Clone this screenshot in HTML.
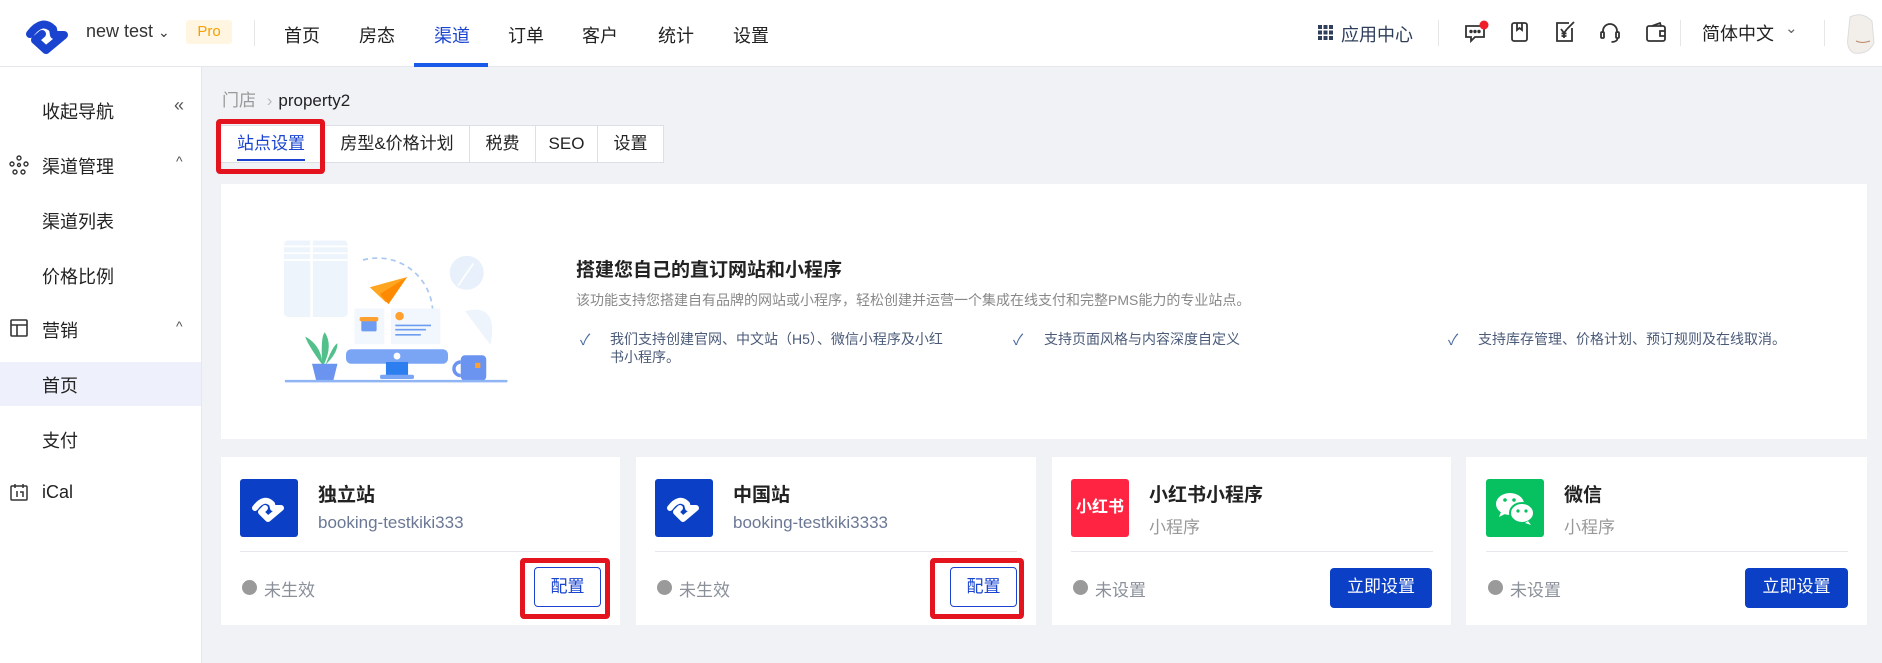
<!DOCTYPE html>
<html><head><meta charset="utf-8"><style>
*{box-sizing:border-box;margin:0;padding:0}
body{width:1882px;height:663px;overflow:hidden;background:#f0f2f6;font-family:"Liberation Sans","Noto Sans CJK SC",sans-serif;color:#222;position:relative}
.a{position:absolute;white-space:nowrap}
#hd{position:absolute;left:0;top:0;width:1882px;height:67px;background:#fff;border-bottom:1px solid #e6e8ee}
#sb{position:absolute;left:0;top:67px;width:202px;height:596px;background:#fff;border-right:1px solid #e6e8ee}
.nav{font-size:18px;color:#222;top:22px}
.si{font-size:18px;color:#222;left:42px}
.card{position:absolute;background:#fff}
.tab{position:absolute;top:125px;height:38px;border:1px solid #dcdfe6;background:#fff;font-size:17px;text-align:center;line-height:36px;color:#222}
.chk{font-size:14px;color:#4a5a78;line-height:18px}
.ck{color:#4a6aa0;font-size:15px}
.ttl{font-size:19px;font-weight:bold;color:#222}
.sub{font-size:17px;color:#6b7895}
.st{font-size:17px;color:#8a8f99}
.dot{width:15px;height:15px;border-radius:50%;background:#9a9a9a}
.btn{height:40px;border-radius:4px;font-size:17px;text-align:center;line-height:38px}
.red{position:absolute;border:5px solid #e3141e;border-radius:4px}
.ic{position:absolute;top:20px}
</style></head><body>
<div id="hd">
<svg class="a" style="left:22px;top:12px" width="48" height="42" viewBox="0 0 48 42"><path d="M8 22 Q20 6 31 17 L32 23 L42 23 L24 38 L13 28 L20 22" fill="none" stroke="#1a44d0" stroke-width="8" stroke-linejoin="round" stroke-linecap="round"/></svg>
<div class="a" style="left:86px;top:21px;font-size:18px;color:#333">new test <span style="font-size:14px">⌄</span></div>
<div class="a" style="left:186px;top:20px;width:46px;height:24px;background:#fff5e0;color:#f5a000;font-size:15px;text-align:center;line-height:24px;border-radius:3px">Pro</div>
<div class="a" style="left:254px;top:20px;width:1px;height:26px;background:#e6e6e6"></div>
<div class="a nav" style="left:284px">首页</div>
<div class="a nav" style="left:359px">房态</div>
<div class="a nav" style="left:434px;color:#1a44d0">渠道</div>
<div class="a nav" style="left:508px">订单</div>
<div class="a nav" style="left:582px">客户</div>
<div class="a nav" style="left:658px">统计</div>
<div class="a nav" style="left:733px">设置</div>
<div class="a" style="left:414px;top:63px;width:74px;height:4px;background:#1a5ae8"></div>
<svg class="a" style="left:1318px;top:25px" width="15" height="15"><g fill="#2f3e5a"><rect x="0" y="0" width="4" height="4"/><rect x="5.5" y="0" width="4" height="4"/><rect x="11" y="0" width="4" height="4"/><rect x="0" y="5.5" width="4" height="4"/><rect x="5.5" y="5.5" width="4" height="4"/><rect x="11" y="5.5" width="4" height="4"/><rect x="0" y="11" width="4" height="4"/><rect x="5.5" y="11" width="4" height="4"/><rect x="11" y="11" width="4" height="4"/></g></svg>
<div class="a" style="left:1341px;top:21px;font-size:18px;color:#2f3e5a">应用中心</div>
<div class="a" style="left:1438px;top:20px;width:1px;height:26px;background:#e6e6e6"></div>
<svg class="ic a" style="left:1463px" width="26" height="26" viewBox="0 0 26 26" fill="none" stroke="#333" stroke-width="1.8"><path d="M3 6h18v11h-9l-4 4v-4H3z"/><circle cx="8" cy="11.5" r=".8" fill="#333"/><circle cx="12" cy="11.5" r=".8" fill="#333"/><circle cx="16" cy="11.5" r=".8" fill="#333"/><circle cx="21" cy="5" r="4.5" fill="#f01c28" stroke="none"/></svg>
<svg class="ic a" style="left:1508px" width="24" height="24" viewBox="0 0 24 24" fill="none" stroke="#333" stroke-width="1.8"><rect x="4" y="3" width="15" height="18" rx="2"/><path d="M9 3v7l2.5-2 2.5 2V3"/></svg>
<svg class="ic a" style="left:1553px" width="24" height="24" viewBox="0 0 24 24" fill="none" stroke="#333" stroke-width="1.8"><path d="M16 3H4v18h15V8"/><path d="M14 9l7-7"/><path d="M8 9l3 4 3-4M11 13v5M8.5 13.5h5M8.5 16h5"/></svg>
<svg class="ic a" style="left:1598px" width="24" height="24" viewBox="0 0 24 24" fill="none" stroke="#333" stroke-width="1.8"><path d="M5 13v-2a7 7 0 0 1 14 0v2"/><rect x="3" y="12" width="3" height="6" rx="1"/><rect x="18" y="12" width="3" height="6" rx="1"/><path d="M19.5 18c0 3-3 4-6 4"/></svg>
<svg class="ic a" style="left:1644px" width="24" height="24" viewBox="0 0 24 24" fill="none" stroke="#333" stroke-width="1.8"><rect x="3" y="6" width="18" height="15" rx="2"/><path d="M8 6l8-3 1 3"/><path d="M21 11h-5v5h5"/></svg>
<div class="a" style="left:1680px;top:20px;width:1px;height:26px;background:#e6e6e6"></div>
<div class="a" style="left:1702px;top:20px;font-size:18px;color:#222">简体中文</div>
<div class="a" style="left:1785px;top:19px;font-size:15px;color:#666">⌄</div>
<div class="a" style="left:1824px;top:20px;width:1px;height:26px;background:#e6e6e6"></div>
<svg class="a" style="left:1842px;top:13px" width="40" height="44" viewBox="0 0 40 44"><path d="M8 4 Q20 -2 30 8 L32 30 Q26 42 12 40 Q4 36 6 24 Z" fill="#f2efea" stroke="#ddd"/><path d="M14 28q6 3 14 0" stroke="#b86" fill="none"/></svg>
</div>
<div id="sb">
<div class="a si" style="top:31px">收起导航</div>
<div class="a" style="left:174px;top:28px;font-size:18px;color:#555">«</div>
<svg class="a" style="left:9px;top:88px" width="20" height="20" viewBox="0 0 20 20" fill="none" stroke="#333" stroke-width="1.4"><circle cx="10" cy="3" r="2"/><circle cx="3" cy="9" r="2"/><circle cx="17" cy="9" r="2"/><circle cx="6" cy="17" r="2"/><circle cx="14" cy="17" r="2"/><circle cx="10" cy="10" r="1.5"/></svg>
<div class="a si" style="top:86px">渠道管理</div>
<div class="a" style="left:176px;top:86px;font-size:14px;color:#555">^</div>
<div class="a si" style="top:141px">渠道列表</div>
<div class="a si" style="top:196px">价格比例</div>
<svg class="a" style="left:10px;top:252px" width="18" height="18" viewBox="0 0 18 18" fill="none" stroke="#333" stroke-width="1.6"><rect x="1" y="1" width="16" height="16" rx="1"/><path d="M1 6h16M7 6v11"/></svg>
<div class="a si" style="top:250px">营销</div>
<div class="a" style="left:176px;top:251px;font-size:14px;color:#555">^</div>
<div class="a" style="left:0;top:295px;width:201px;height:44px;background:#eef1fb"></div>
<div class="a si" style="top:305px">首页</div>
<div class="a si" style="top:360px">支付</div>
<svg class="a" style="left:10px;top:416px" width="18" height="18" viewBox="0 0 18 18" fill="none" stroke="#333" stroke-width="1.5"><rect x="1" y="3" width="16" height="14" rx="1"/><path d="M5 1v4M13 1v4M7 8v6M10 9h3v5"/></svg>
<div class="a si" style="top:415px">iCal</div>
</div>
<div class="a" style="left:222px;top:86px;font-size:17px;color:#999">门店 <span style="color:#bbb;margin:0 6px">›</span><span style="color:#222">property2</span></div>
<div class="tab" style="left:218px;width:106px;color:#1a44d0"><span style="border-bottom:2px solid #1a44d0;padding-bottom:6px">站点设置</span></div>
<div class="tab" style="left:324px;width:146px">房型&amp;价格计划</div>
<div class="tab" style="left:469px;width:67px">税费</div>
<div class="tab" style="left:535px;width:63px">SEO</div>
<div class="tab" style="left:597px;width:67px">设置</div>
<div class="red" style="left:216px;top:119px;width:109px;height:55px"></div>
<div class="card" style="left:221px;top:184px;width:1646px;height:255px"></div>
<svg class="a" style="left:262px;top:226px" width="270" height="170" viewBox="0 0 300 200">
<rect x="17" y="17" width="75" height="90" rx="5" fill="#eef4fc"/><rect x="48" y="17" width="3" height="90" fill="#fff"/><path d="M17 40h75M17 32h75M17 24h75" stroke="#fff" stroke-width="2"/>
<path d="M110 40a65 65 0 0 1 82 60" stroke="#a9c8f0" stroke-width="2" fill="none" stroke-dasharray="6 5"/>
<circle cx="232" cy="55" r="20" fill="#e8f0fc"/><path d="M222 70l18-26" stroke="#fff" stroke-width="2"/>
<path d="M230 100q40-10 30 40" fill="#eef4fc"/>
<rect x="100" y="97" width="35" height="42" fill="#f2f6fd"/><rect x="143" y="97" width="58" height="42" fill="#f2f6fd"/>
<rect x="108" y="110" width="18" height="14" rx="2" fill="#6e9cf0"/><rect x="106" y="107" width="22" height="5" rx="2" fill="#ffa030"/>
<circle cx="153" cy="106" r="5" fill="#ffa030"/><path d="M148 117h42M148 122h36M148 128h30" stroke="#6e9cf0" stroke-width="2"/>
<path d="M118 72l44-12-25 30z" fill="#ffa51f"/><path d="M130 80l10 12 22-32z" fill="#ff8a00"/>
<rect x="90" y="145" width="120" height="17" rx="6" fill="#7aa5f5"/><circle cx="150" cy="153" r="4" fill="#fff"/><rect x="137" y="160" width="26" height="16" fill="#2d7ff0"/><rect x="130" y="175" width="40" height="5" rx="2" fill="#7aa5f5"/>
<path d="M62 163 Q45 140 42 130 Q60 140 62 160 M62 163 Q60 130 65 125 Q75 140 64 163 M66 163 Q75 140 80 138 Q80 150 66 163" fill="#52c08a"/>
<path d="M50 162h30l-5 20h-20z" fill="#6a94f0"/>
<rect x="225" y="152" width="30" height="30" rx="5" fill="#6a94f0"/><path d="M225 160a8 8 0 0 0 0 16" stroke="#6a94f0" stroke-width="4" fill="none"/><rect x="242" y="161" width="6" height="6" fill="#ffa030"/>
<rect x="18" y="181" width="262" height="3" rx="1" fill="#8fb5f5"/>
</svg>
<div class="a" style="left:576px;top:255px;font-size:19px;font-weight:bold;color:#222">搭建您自己的直订网站和小程序</div>
<div class="a" style="left:576px;top:290px;font-size:14px;color:#888">该功能支持您搭建自有品牌的网站或小程序，轻松创建并运营一个集成在线支付和完整PMS能力的专业站点。</div>
<div class="a ck" style="left:580px;top:329px">✓</div>
<div class="a chk" style="left:610px;top:330px">我们支持创建官网、中文站（H5）、微信小程序及小红<br>书小程序。</div>
<div class="a ck" style="left:1013px;top:329px">✓</div>
<div class="a chk" style="left:1044px;top:330px">支持页面风格与内容深度自定义</div>
<div class="a ck" style="left:1448px;top:329px">✓</div>
<div class="a chk" style="left:1478px;top:330px">支持库存管理、价格计划、预订规则及在线取消。</div>

<div class="card" style="left:221px;top:457px;width:399px;height:168px"></div>
<div class="card" style="left:636px;top:457px;width:400px;height:168px"></div>
<div class="card" style="left:1052px;top:457px;width:399px;height:168px"></div>
<div class="card" style="left:1466px;top:457px;width:401px;height:168px"></div>

<svg class="a" style="left:240px;top:479px" width="58" height="58" viewBox="0 0 58 58"><rect width="58" height="58" rx="3" fill="#0a3fc6"/><path d="M15 29 Q24 17 32 25 L33 29 L41 29 L28 40 L21 33 L25 29" fill="none" stroke="#fff" stroke-width="6" stroke-linejoin="round" stroke-linecap="round"/></svg>
<div class="a ttl" style="left:318px;top:480px">独立站</div>
<div class="a sub" style="left:318px;top:513px">booking-testkiki333</div>
<div class="a" style="left:240px;top:551px;width:360px;height:1px;background:#e6e8ec"></div>
<div class="a dot" style="left:242px;top:580px"></div><div class="a st" style="left:264px;top:576px">未生效</div>
<div class="a btn" style="left:534px;top:567px;width:67px;border:1px solid #1a44d0;color:#1a44d0;background:#fff">配置</div>
<div class="red" style="left:520px;top:558px;width:90px;height:61px"></div>

<svg class="a" style="left:655px;top:479px" width="58" height="58" viewBox="0 0 58 58"><rect width="58" height="58" rx="3" fill="#0a3fc6"/><path d="M15 29 Q24 17 32 25 L33 29 L41 29 L28 40 L21 33 L25 29" fill="none" stroke="#fff" stroke-width="6" stroke-linejoin="round" stroke-linecap="round"/></svg>
<div class="a ttl" style="left:733px;top:480px">中国站</div>
<div class="a sub" style="left:733px;top:513px">booking-testkiki3333</div>
<div class="a" style="left:655px;top:551px;width:362px;height:1px;background:#e6e8ec"></div>
<div class="a dot" style="left:657px;top:580px"></div><div class="a st" style="left:679px;top:576px">未生效</div>
<div class="a btn" style="left:950px;top:567px;width:67px;border:1px solid #1a44d0;color:#1a44d0;background:#fff">配置</div>
<div class="red" style="left:930px;top:558px;width:94px;height:61px"></div>

<div class="a" style="left:1071px;top:479px;width:58px;height:58px;background:#ff2442;border-radius:3px;color:#fff;font-weight:bold;font-size:16px;text-align:center;line-height:58px">小红书</div>
<div class="a ttl" style="left:1149px;top:480px">小红书小程序</div>
<div class="a sub" style="left:1149px;top:513px;color:#999">小程序</div>
<div class="a" style="left:1071px;top:551px;width:362px;height:1px;background:#e6e8ec"></div>
<div class="a dot" style="left:1073px;top:580px"></div><div class="a st" style="left:1095px;top:576px">未设置</div>
<div class="a btn" style="left:1330px;top:568px;width:102px;background:#0a3fc6;color:#fff">立即设置</div>

<svg class="a" style="left:1486px;top:479px" width="58" height="58" viewBox="0 0 58 58"><rect width="58" height="58" rx="3" fill="#07c160"/><ellipse cx="24" cy="25" rx="14" ry="11" fill="#fff"/><path d="M15 33l-2 5 6-3z" fill="#fff"/><ellipse cx="36" cy="34" rx="12" ry="10" fill="#fff" stroke="#07c160" stroke-width="2"/><path d="M42 42l3 4-6-2z" fill="#fff"/><circle cx="19" cy="21" r="1.8" fill="#07c160"/><circle cx="28" cy="21" r="1.8" fill="#07c160"/><circle cx="32" cy="32" r="1.6" fill="#07c160"/><circle cx="40" cy="32" r="1.6" fill="#07c160"/></svg>
<div class="a ttl" style="left:1564px;top:480px">微信</div>
<div class="a sub" style="left:1564px;top:513px;color:#999">小程序</div>
<div class="a" style="left:1486px;top:551px;width:362px;height:1px;background:#e6e8ec"></div>
<div class="a dot" style="left:1488px;top:580px"></div><div class="a st" style="left:1510px;top:576px">未设置</div>
<div class="a btn" style="left:1745px;top:568px;width:103px;background:#0a3fc6;color:#fff">立即设置</div>
</body></html>
